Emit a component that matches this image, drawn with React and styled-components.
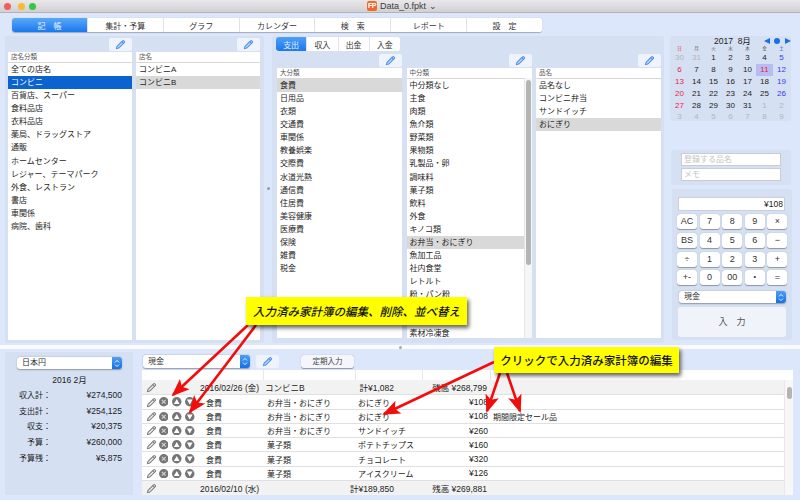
import React from 'react';
import styled, { createGlobalStyle } from 'styled-components';

const Global = createGlobalStyle`
  html, body { margin: 0; padding: 0; background: #dde7fb; }
  * { box-sizing: border-box; }
  body { font-family: "Liberation Sans", "Noto Sans CJK JP", sans-serif; color: #222; font-size: 8px; }
`;

const Page = styled.div`
  position: relative; width: 800px; height: 500px; overflow: hidden; background: #dde7fb;
  display: flex; flex-direction: column;
`;
const TitleBar = styled.div`
  height: 13px; flex: none; display: flex; align-items: center; padding-left: 4px;
  background: linear-gradient(#e9e7e9, #d2d0d2); border-bottom: 1px solid #b4b4b4;
`;
const Light = styled.span`
  width: 7px; height: 7px; border-radius: 50%; margin-right: ${p => p.$mr}px; background: ${p => p.$c};
`;
const TitleIcon = styled.span`
  margin-left: 331px; width: 10px; height: 10px; border-radius: 2px; background: #f0692a; color: #fff;
  font-size: 7px; font-weight: bold; line-height: 10px; text-align: center; letter-spacing: -0.5px;
`;
const TitleText = styled.span` margin-left: 3px; font-size: 9px; color: #3c3c3c; `;

const TabBar = styled.div`
  margin: 5px 0 0 12px; width: 530px; height: 14px; flex: none; display: flex; background: #fff;
  border-radius: 3px; box-shadow: 0 0.5px 1px #9fa8bb; overflow: hidden;
`;
const Tab = styled.div`
  flex: 1; display: flex; align-items: center; justify-content: center; font-size: 8px; white-space: pre;
  border-left: ${p => (p.$first ? 'none' : '1px solid #e2e2e2')};
  color: ${p => (p.$on ? '#e8f2ff' : '#333')};
  background: ${p => (p.$on ? 'linear-gradient(#5aa8f7, #1a78ee)' : '#fff')};
`;

const Main = styled.div` display: flex; height: 307px; margin-top: 4px; padding-left: 5px; flex: none; `;
const Panel = styled.div` background: #d5e0f2; border-radius: 2px; `;
const StorePanel = styled(Panel)`
  width: 259px; padding: 2px 4px 3px 3px; display: grid; grid-template-columns: 124px 124px; column-gap: 4px;
`;
const Column = styled.div` display: flex; flex-direction: column; min-height: 0; min-width: 0; `;
const PenBar = styled.div` height: 14px; flex: none; display: flex; justify-content: flex-end; `;
const PenBtn = styled.div`
  width: 23px; height: 13px; background: #eef3fc; border-radius: 2px; display: flex; align-items: center; justify-content: center;
`;
const LedgerPenBtn = styled(PenBtn)` margin-left: 6px; `;
const Divider = styled.div`
  width: 8px; display: flex; align-items: center; justify-content: center;
  &::after { content: ''; width: 3px; height: 3px; border-radius: 50%; background: #9a9a9a; margin-top: -2px; }
`;
const ExpensePanel = styled(Panel)` width: 392px; padding: 1px 3px 5px 5px; display: flex; flex-direction: column; `;
const SubTabs = styled.div`
  width: 124px; height: 14px; margin-left: -1px; flex: none; display: flex; background: #fff; border-radius: 3px; overflow: hidden;
`;
const SubTab = styled.div`
  flex: 1; display: flex; align-items: center; justify-content: center; font-size: 8px;
  border-left: ${p => (p.$first ? 'none' : '1px solid #e4e4e4')};
  color: ${p => (p.$on ? '#e8f2ff' : '#333')};
  background: ${p => (p.$on ? 'linear-gradient(#4f9ff5, #1a78ee)' : '#fff')};
`;
const ExpenseLists = styled.div`
  flex: 1; min-height: 0; margin-top: 3px; display: grid; grid-template-columns: 125px 125px 125px; column-gap: 4.5px;
`;
const List = styled.div` flex: 1; min-height: 0; background: #fff; overflow: hidden; position: relative; `;
const ListHead = styled.div`
  height: 11px; padding-left: 3px; font-size: 6.5px; line-height: 10px; color: #555; border-bottom: 1px solid #d8d8d8;
`;
const Item = styled.div`
  height: 13.08px; line-height: 13px; padding-left: 3px; font-size: 8px; white-space: nowrap; overflow: hidden;
  background: ${p => (p.$sel === 'blue' ? '#0a63ce' : p.$sel === 'grey' ? '#d9d9d9' : 'transparent')};
  color: ${p => (p.$sel === 'blue' ? '#fff' : '#1e1e1e')};
`;
const ScrollTrack = styled.div`
  position: absolute; top: 10px; right: 0; bottom: 0; width: 8px; background: #f6f6f6; border-left: 1px solid #e6e6e6;
  padding: 2px 1.5px;
`;
const ScrollThumb = styled.div` width: 4.5px; height: ${p => p.$h}px; background: #b4b4b4; border-radius: 3px; `;

const Side = styled.div` width: 122px; margin-left: 6px; display: flex; flex-direction: column; `;
const Calendar = styled(Panel)` height: 85px; width: 121px; display: flex; flex-direction: column; `;
const CalHead = styled.div` height: 9.5px; display: flex; align-items: flex-end; padding-left: 44px; font-size: 8.5px; color: #222; `;
const CalNav = styled.div` margin-left: 13px; display: flex; gap: 4.5px; align-items: center; height: 9px; `;
const WeekRow = styled.div` display: grid; grid-template-columns: repeat(7, 17px); height: 6px; padding-left: 1px; `;
const WeekDay = styled.div` font-size: 4.5px; line-height: 6px; text-align: center; color: ${p => p.$c || '#555'}; `;
const CalRule = styled.div` height: 1px; background: #8a93a3; margin: 0 1px; `;
const CalGrid = styled.div` display: grid; grid-template-columns: repeat(7, 17px); grid-auto-rows: 11.9px; padding: 0.5px 0 0 1px; `;
const Day = styled.div`
  font-size: 8px; line-height: 12px; text-align: center; color: ${p => p.$c};
  background: ${p => (p.$today ? '#b9bcf2' : 'transparent')};
`;
const NamePanel = styled(Panel)` margin-top: 29px; height: 35px; width: 120px; margin-left: 1px; padding: 2.5px 10px; display: flex; flex-direction: column; gap: 2px; `;
const TextField = styled.div`
  height: 13px; background: #fff; border: 1px solid #c8ccd4; font-size: 8px; line-height: 11px; padding-left: 2px; color: #c4c4c4;
`;
const CalcPanel = styled(Panel)` margin: 4px 0 0 2px; width: 120px; height: 151px; padding: 8px 5px 0 5px; `;
const Display = styled.div`
  height: 14px; margin: 0 2px 0 1px; background: #fff; border: 1px solid #ccd; text-align: right; font-size: 8.5px; line-height: 12px; padding-right: 1px; color: #222;
`;
const Keys = styled.div`
  margin-top: 3px; display: grid; grid-template-columns: repeat(5, 20px); column-gap: 2.6px; row-gap: 3.8px;
`;
const Key = styled.div`
  height: 15px; background: #fff; border-radius: 3px; box-shadow: 0 0.5px 1px #8d95a5; font-size: 9px; line-height: 15px; text-align: center; color: #333; overflow: hidden;
`;
const Select = styled.div`
  height: ${p => p.$h || 12}px; width: ${p => p.$w}px; background: #fff; border-radius: 3px; box-shadow: 0 0.5px 1.5px #8d95a5;
  font-size: 8px; line-height: ${p => p.$h || 12}px; padding-left: 5px; position: relative; color: #333; flex: none;
  margin: ${p => p.$m || 0};
`;
const SelectCap = styled.span`
  position: absolute; right: 0; top: 0; bottom: 0; width: 10px; background: linear-gradient(#4f9ff5, #1470e6); border-radius: 0 3px 3px 0;
  display: flex; align-items: center; justify-content: center;
`;
const EnterBtn = styled.div`
  margin: 4px 0 0 1px; width: 108px; height: 30px; background: #f0f3f9; border-radius: 3px; font-size: 9px; line-height: 30px; text-align: center; color: #555; white-space: pre;
`;

const Band = styled.div`
  flex: none; height: 4px; margin-top: 2px; background: #fbfbfb; display: flex; justify-content: center; align-items: center;
  &::after { content: ''; width: 3px; height: 3px; border-radius: 50%; background: #aaa; }
`;
const Bottom = styled.div` flex: 1; display: flex; padding: 3px 7px 5px 5px; min-height: 0; `;
const Summary = styled(Panel)` width: 128px; padding: 5px 11px 0 12px; `;
const MonthLabel = styled.div` text-align: center; font-size: 8.5px; margin: 4px 0 1px; height: 14px; line-height: 14px; `;
const SumRow = styled.div` display: flex; justify-content: space-between; height: 15.7px; line-height: 15.7px; font-size: 8.5px; `;
const SumLabel = styled.span` width: 40px; margin-left: -6px; text-align: right; font-size: 8px; `;
const Ledger = styled.div` margin-left: 9px; flex: 1; display: flex; flex-direction: column; min-width: 0; `;
const LedgerBar = styled.div` height: 18px; flex: none; display: flex; padding: 3px 0 0 1px; `;
const SmallBtn = styled.div`
  margin-left: 22px; width: 53px; height: 13px; background: #f4f6fb; border-radius: 3px; box-shadow: 0 0.5px 1px #8d95a5; font-size: 7.5px; line-height: 13px; text-align: center; color: #444;
`;
const Table = styled.div` flex: 1; min-height: 0; background: #fff; position: relative; overflow: hidden; padding-right: 9px; `;
const TableHead = styled.div`
  height: 10px; display: grid; grid-template-columns: 122px 92px 67px 68px 1fr; background: #fff;
  & > span { border-right: 1px solid #e8e8e8; }
`;
const TableScroll = styled.div`
  position: absolute; top: 10px; right: 0; bottom: 0; width: 9px; background: #f7f7f7; border-left: 1px solid #e8e8e8; padding: 7px 2px;
`;
const TableThumb = styled.div` width: 4.5px; height: 12px; background: #b4b4b4; border-radius: 3px; `;
const GroupRow = styled.div`
  height: 15.4px; display: grid; grid-template-columns: 58px 65px 60px 69px 93px; align-items: center; background: #f2f2f2; border-bottom: 1.5px solid #e0e0e0; font-size: 8.5px; color: #222;
`;
const EntryRow = styled.div`
  height: 14.25px; display: grid; grid-template-columns: 64px 61px 91px 70px 60px 1fr; align-items: center; background: #fff; border-bottom: 1.5px solid #e0e0e0; font-size: 8px; color: #222;
`;
const Tools = styled.div`
  display: grid; grid-template-columns: 11px 13px 14px 12px; justify-items: center; align-items: center; padding-left: 4px;
`;
const Cell = styled.span` text-align: ${p => (p.$r ? 'right' : 'left')}; white-space: nowrap; padding-left: ${p => p.$pl || 0}px; `;
const Price = styled(Cell)` font-size: 8.5px; text-align: right; `;

const Callout = styled.div`
  position: absolute; left: ${p => p.$x}px; top: ${p => p.$y}px; width: ${p => p.$w}px; height: ${p => p.$h}px;
  background: #ffff00; box-shadow: 2px 3px 4px rgba(0,0,0,.6); color: #111; font-size: 11.5px; font-weight: 500;
  display: flex; align-items: center; justify-content: center; white-space: nowrap;
  font-style: ${p => (p.$i ? 'italic' : 'normal')};
`;
const Arrows = styled.svg` position: absolute; left: 0; top: 0; `;

const PenIcon = ({ c = '#4a90e8', s = 11 }) => (
  <svg width={s} height={s} viewBox="0 0 12 12" fill="none" stroke={c} strokeWidth="1.1">
    <path d="M2.2 8 L8.2 2 a1 1 0 0 1 1.5 0 l.4.4 a1 1 0 0 1 0 1.5 L4.1 9.9 L1.6 10.5 Z" fill={c === '#4a90e8' ? '#bcd6f6' : '#eee'} />
    <path d="M7.4 2.9 L9.2 4.7" />
  </svg>
);
const Circ = ({ children }) => (
  <svg width="9.5" height="9.5" viewBox="0 0 10 10"><circle cx="5" cy="5" r="5" fill="#757575" />{children}</svg>
);
const XIcon = () => <Circ><path d="M3 3 L7 7 M7 3 L3 7" stroke="#cfcfcf" strokeWidth="1.3" /></Circ>;
const UpIcon = () => <Circ><path d="M5 2 L8 7.4 H2 Z" fill="#fff" /></Circ>;
const DownIcon = () => <Circ><path d="M5 8 L8 2.6 H2 Z" fill="#fff" /></Circ>;
const Updown = () => (
  <svg width="6" height="9" viewBox="0 0 6 9" fill="none" stroke="#fff" strokeWidth="0.9"><path d="M1 3.4 L3 1.4 L5 3.4 M1 5.6 L3 7.6 L5 5.6" /></svg>
);

const stores = ['全ての店名','コンビニ','百貨店、スーパー','食料品店','衣料品店','薬局、ドラッグストア','通販','ホームセンター','レジャー、テーマパーク','外食、レストラン','書店','車関係','病院、歯科'];
const big = ['食費','日用品','衣類','交通費','車関係','教養娯楽','交際費','水道光熱','通信費','住居費','美容健康','医療費','保険','雑費','税金'];
const mid = ['中分類なし','主食','肉類','魚介類','野菜類','果物類','乳製品・卵','調味料','菓子類','飲料','外食','キノコ類','お弁当・おにぎり','魚加工品','社内食堂','レトルト','粉・パン粉','','','素材冷凍食'];
const goods = ['品名なし','コンビニ弁当','サンドイッチ','おにぎり'];
const tabs = ['記　帳','集計・予算','グラフ','カレンダー','検　索','レポート','設　定'];
const keys = ['AC','7','8','9','×','BS','4','5','6','−','÷','1','2','3','+','+-','0','00','・','='];
const week = [['日','#e33'],['月'],['火'],['水'],['木'],['金'],['土','#33c']];
const days = [30,31,1,2,3,4,5,6,7,8,9,10,11,12,13,14,15,16,17,18,19,20,21,22,23,24,25,26,27,28,29,30,31,1,2,3,4,5,6,7,8,9];
const summary = [['収入計：','¥274,500'],['支出計：','¥254,125'],['収支：','¥20,375'],['予算：','¥260,000'],['予算残：','¥5,875']];
const entries = [
  ['食費','お弁当・おにぎり','おにぎり','¥108',''],
  ['食費','お弁当・おにぎり','おにぎり','¥108','期間限定セール品'],
  ['食費','お弁当・おにぎり','サンドイッチ','¥260',''],
  ['食費','菓子類','ポテトチップス','¥160',''],
  ['食費','菓子類','チョコレート','¥320',''],
  ['食費','菓子類','アイスクリーム','¥126',''],
];

const dayColor = (i) => {
  if (i < 2 || i >= 33) return '#b5b5b5';
  if (i % 7 === 0) return '#ee2244';
  if (i % 7 === 6) return '#3a3af0';
  if (i === 12) return '#ee2244';
  return '#222';
};

const Pen = () => <PenBar><PenBtn><PenIcon /></PenBtn></PenBar>;

export default function App() {
  return (
    <Page>
      <Global />
      <TitleBar>
        <Light $c="#f25f58" $mr={7} /><Light $c="#f8bb2e" $mr={4} /><Light $c="#36c644" />
        <TitleIcon>FP</TitleIcon>
        <TitleText>Data_0.fpkt ⌄</TitleText>
      </TitleBar>
      <TabBar>
        {tabs.map((t, i) => <Tab key={t} $on={i === 0} $first={i === 0}>{t}</Tab>)}
      </TabBar>
      <Main>
        <StorePanel>
          <Column>
            <Pen />
            <List>
              <ListHead>店名分類</ListHead>
              {stores.map((s, i) => <Item key={s} $sel={i === 1 ? 'blue' : ''}>{s}</Item>)}
            </List>
          </Column>
          <Column>
            <Pen />
            <List>
              <ListHead>店名</ListHead>
              <Item>コンビニA</Item>
              <Item $sel="grey">コンビニB</Item>
            </List>
          </Column>
        </StorePanel>
        <Divider />
        <ExpensePanel>
          <SubTabs>
            {['支出','収入','出金','入金'].map((t, i) => <SubTab key={t} $on={i === 0} $first={i === 0}>{t}</SubTab>)}
          </SubTabs>
          <ExpenseLists>
            <Column>
              <Pen />
              <List>
                <ListHead>大分類</ListHead>
                {big.map((s, i) => <Item key={s} $sel={i === 0 ? 'grey' : ''}>{s}</Item>)}
              </List>
            </Column>
            <Column>
              <Pen />
              <List>
                <ListHead>中分類</ListHead>
                {mid.map((s, i) => <Item key={i} $sel={i === 12 ? 'grey' : ''}>{s}</Item>)}
                <ScrollTrack><ScrollThumb $h={185} /></ScrollTrack>
              </List>
            </Column>
            <Column>
              <Pen />
              <List>
                <ListHead>品名</ListHead>
                {goods.map((s, i) => <Item key={s} $sel={i === 3 ? 'grey' : ''}>{s}</Item>)}
              </List>
            </Column>
          </ExpenseLists>
        </ExpensePanel>
        <Side>
          <Calendar>
            <CalHead>
              2017&nbsp;&nbsp;8月
              <CalNav>
                <svg width="6" height="6" viewBox="0 0 6 6"><path d="M0 3 L6 0 V6 Z" fill="#1a6fe8" /></svg>
                <svg width="6" height="6" viewBox="0 0 6 6"><circle cx="3" cy="3" r="3" fill="#1a6fe8" /></svg>
                <svg width="6" height="6" viewBox="0 0 6 6"><path d="M6 3 L0 0 V6 Z" fill="#1a6fe8" /></svg>
              </CalNav>
            </CalHead>
            <WeekRow>{week.map(([w, c]) => <WeekDay key={w} $c={c}>{w}</WeekDay>)}</WeekRow>
            <CalRule />
            <CalGrid>
              {days.map((d, i) => <Day key={i} $c={dayColor(i)} $today={i === 12}>{d}</Day>)}
            </CalGrid>
          </Calendar>
          <NamePanel>
            <TextField>登録する品名</TextField>
            <TextField>メモ</TextField>
          </NamePanel>
          <CalcPanel>
            <Display>¥108</Display>
            <Keys>{keys.map((k, i) => <Key key={i}>{k}</Key>)}</Keys>
            <Select $w={107} $m="6px 0 0 2px">現金<SelectCap><Updown /></SelectCap></Select>
            <EnterBtn>入　力</EnterBtn>
          </CalcPanel>
        </Side>
      </Main>
      <Band />
      <Bottom>
        <Summary>
          <Select $w={105}>日本円<SelectCap><Updown /></SelectCap></Select>
          <MonthLabel>2016 2月</MonthLabel>
          {summary.map(([a, b]) => <SumRow key={a}><SumLabel>{a}</SumLabel><span>{b}</span></SumRow>)}
        </Summary>
        <Ledger>
          <LedgerBar>
            <Select $w={107} $h={13}>現金<SelectCap><Updown /></SelectCap></Select>
            <LedgerPenBtn><PenIcon /></LedgerPenBtn>
            <SmallBtn>定期入力</SmallBtn>
          </LedgerBar>
          <Table>
            <TableHead><span /><span /><span /><span /></TableHead>
            <GroupRow>
              <Tools><PenIcon c="#7a7a7a" /></Tools>
              <Cell>2016/02/26 (金)</Cell>
              <Cell>コンビニB</Cell>
              <Cell $r>計¥1,082</Cell>
              <Cell $r>残高 ¥268,799</Cell>
            </GroupRow>
            {entries.map((e, i) => (
              <EntryRow key={i}>
                <Tools><PenIcon c="#7a7a7a" /><XIcon /><UpIcon /><DownIcon /></Tools>
                <Cell>{e[0]}</Cell>
                <Cell>{e[1]}</Cell>
                <Cell>{e[2]}</Cell>
                <Price>{e[3]}</Price>
                <Cell $pl={5}>{e[4]}</Cell>
              </EntryRow>
            ))}
            <GroupRow>
              <Tools><PenIcon c="#7a7a7a" /></Tools>
              <Cell>2016/02/10 (水)</Cell>
              <Cell />
              <Cell $r>計¥189,850</Cell>
              <Cell $r>残高 ¥269,881</Cell>
            </GroupRow>
            <TableScroll><TableThumb /></TableScroll>
          </Table>
        </Ledger>
      </Bottom>

      <Arrows width="800" height="500" viewBox="0 0 800 500">
        <defs>
          <marker id="head" markerUnits="userSpaceOnUse" markerWidth="18" markerHeight="14" refX="16" refY="7" orient="auto">
            <path d="M0 0 L18 7 L0 14 L4 7 Z" fill="#f20d0d" />
          </marker>
        </defs>
        <g stroke="#f20d0d" strokeWidth="2.6" fill="none">
          <path d="M248 325 L173 395" markerEnd="url(#head)" />
          <path d="M256 325 L190 412" markerEnd="url(#head)" />
          <path d="M494 362 L384 414" markerEnd="url(#head)" />
          <path d="M500 373 L487 411" markerEnd="url(#head)" />
          <path d="M507 373 L520 411" markerEnd="url(#head)" />
        </g>
      </Arrows>
      <Callout $x={246} $y={297} $w={221} $h={28} $i>入力済み家計簿の編集、削除、並べ替え</Callout>
      <Callout $x={494} $y={347} $w={185} $h={26}>クリックで入力済み家計簿の編集</Callout>
    </Page>
  );
}
